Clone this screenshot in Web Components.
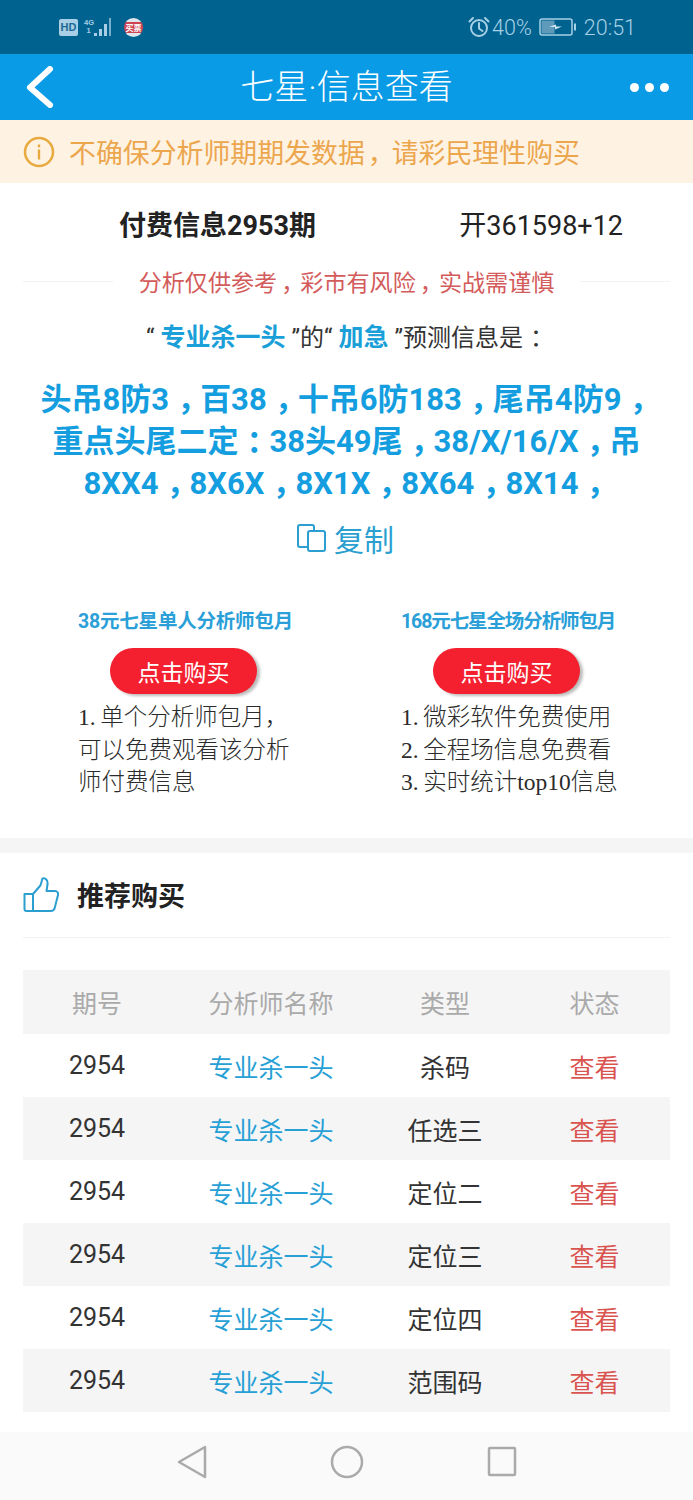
<!DOCTYPE html>
<html lang="zh-CN">
<head>
<meta charset="utf-8">
<title>七星·信息查看</title>
<style>
html,body{margin:0;padding:0;background:#fff}
body{font-family:"Noto Sans CJK SC","Noto Sans",sans-serif;width:693px;height:1500px;overflow:hidden;display:flex;flex-direction:column}
notice-bar i{font-style:normal;margin:0 -3px 0 3px}
</style>
</head>
<body>
<status-bar></status-bar>
<nav-bar>七星·信息查看</nav-bar>
<notice-bar>不确保分析师期期发数据<i>，</i>请彩民理性购买</notice-bar>
<info-panel></info-panel>
<plan-section>
  <plan-card title-text="38元七星单人分析师包月" title-spacing="-.2px"><div>1.&thinsp;单个分析师包月，</div><div>可以免费观看该分析</div><div>师付费信息</div></plan-card>
  <plan-card title-text="168元七星全场分析师包月" title-spacing="-1.1px"><div>1.&thinsp;微彩软件免费使用</div><div>2.&thinsp;全程场信息免费看</div><div>3.&thinsp;实时统计top10信息</div></plan-card>
</plan-section>
<recommend-list>
  <table-row kind="head" a="期号" b="分析师名称" c="类型" d="状态"></table-row>
  <table-row a="2954" b="专业杀一头" c="杀码" d="查看"></table-row>
  <table-row alt a="2954" b="专业杀一头" c="任选三" d="查看"></table-row>
  <table-row a="2954" b="专业杀一头" c="定位二" d="查看"></table-row>
  <table-row alt a="2954" b="专业杀一头" c="定位三" d="查看"></table-row>
  <table-row a="2954" b="专业杀一头" c="定位四" d="查看"></table-row>
  <table-row alt a="2954" b="专业杀一头" c="范围码" d="查看"></table-row>
</recommend-list>
<system-nav></system-nav>
<script>
const CJK='"Noto Sans CJK SC","Noto Sans",sans-serif';
function def(name,html,extra){
  customElements.define(name,class extends HTMLElement{
    constructor(){super();this.attachShadow({mode:'open'}).innerHTML=html;}
    connectedCallback(){if(extra)extra(this,this.shadowRoot);}
  });
}
def('status-bar',`<style>
:host{display:flex;flex:none;height:54px;box-sizing:border-box;padding:0 57px 0 59px;align-items:center;background:#00628f;color:#a6d0e6;font-family:Roboto,sans-serif;font-size:21.5px;font-weight:300}
.l,.r{display:flex;align-items:center}
.sp{flex:1}
.hd{width:19px;height:17px;background:#a8cfe5;border-radius:2px;color:#1c6a92;font:700 11px/17px "Liberation Sans",sans-serif;text-align:center;margin-right:6px}
.net{width:9px;display:flex;flex-direction:column;font:700 7.5px/8px "Liberation Sans",sans-serif;margin-right:1px;text-align:center}
.badge{width:19px;height:19px;margin-left:10px;border-radius:50%;background:linear-gradient(#dfe6ec 0 20%,#cf4453 20% 80%,#dfe6ec 80%);color:#fff;font:700 8px/19px "Noto Sans CJK SC",sans-serif;text-align:center}
svg{display:block}
</style>
<div class="l"><div class="hd">HD</div><div class="net"><span>4G</span><span>1</span></div>
<svg width="20" height="22" viewBox="0 0 20 22" fill="#a8cfe5"><rect x="0" y="17" width="3" height="3"/><rect x="5" y="13" width="3" height="7"/><rect x="10" y="8" width="3" height="12"/><rect x="15" y="2" width="2" height="18" opacity=".7"/></svg>
<div class="badge">买票</div></div>
<div class="sp"></div>
<div class="r">
<svg width="22" height="22" viewBox="0 0 22 22" fill="none" stroke="#a6d0e6" stroke-width="2" style="margin-right:2px"><circle cx="11" cy="12" r="8"/><path d="M11 7v5.5l3.5 2.5M1.5 5.5 5 2M20.5 5.5 17 2" stroke-linecap="round"/></svg>
<span>40%</span>
<svg width="38" height="18" viewBox="0 0 38 18" style="margin:0 7px" fill="none"><rect x="1" y="1" width="32" height="16" rx="2" stroke="#a6d0e6" stroke-width="1.5"/><rect x="2.5" y="2.5" width="13" height="13" fill="#5f9abb"/><path d="M10 9l7-2.5v2h6l-7 3v-2.500z" fill="#d3e6f1"/><rect x="35" y="5.500" width="2" height="7" fill="#a6d0e6"/></svg>
<span>20:51</span></div>`);
def('nav-bar',`<style>
:host{display:flex;flex:none;height:66px;align-items:center;background:#0a9be6;color:#fff;font-family:Roboto,${CJK};font-size:34px;font-weight:300}
.b{width:120px;padding-left:25px;box-sizing:border-box;display:flex;align-items:center}
.t{flex:1;text-align:center;line-height:66px;white-space:nowrap}
.m{width:120px;padding-right:24px;box-sizing:border-box;display:flex;justify-content:flex-end;gap:6px}
.m i{width:9px;height:9px;border-radius:50%;background:#fff;display:block}
</style>
<div class="b"><svg width="29" height="42" viewBox="0 0 29 42" fill="none"><path d="M25 3 5 21.500 25 39" stroke="#fff" stroke-width="6" stroke-linecap="round" stroke-linejoin="round"/></svg></div>
<div class="t"><slot></slot></div>
<div class="m"><i></i><i></i><i></i></div>`);
def('notice-bar',`<style>
:host{display:flex;flex:none;height:63px;align-items:center;background:#fef3e3;color:#eca64e;font-family:${CJK};font-size:26.900px;padding-left:23px;box-sizing:border-box;gap:14px;white-space:nowrap}
svg{display:block;flex:none}
</style>
<svg width="32" height="32" viewBox="0 0 32 32" fill="none"><circle cx="16" cy="16" r="14" stroke="#e8a93f" stroke-width="2.500"/><rect x="14.800" y="13.500" width="2.400" height="10" fill="#e8a93f"/><rect x="14.800" y="8.500" width="2.400" height="2.800" fill="#e8a93f"/></svg>
<span><slot></slot></span>`);
def('info-panel',`<style>
:host{display:block;flex:none;height:422px;box-sizing:border-box;padding-top:26px;font-family:${CJK};color:#222}
.top{display:flex;height:34px;align-items:center;line-height:34px}
.top b{margin-left:119px;font-size:27px;font-weight:700;white-space:nowrap;font-family:Roboto,${CJK}}
.top span{margin-left:auto;margin-right:70px;font-family:Roboto,${CJK};font-size:27px;white-space:nowrap}
.warn{display:flex;align-items:center;margin:20px 23px 0;height:36px;color:#d35b5b;font-size:23.100px;justify-content:center;white-space:nowrap}
.warn i{flex:1;height:1px;background:#f3f3f3}
.warn span{margin:0 26px}
.warn em{font-style:normal;margin:0 -4px 0 4px}
.ask{margin-top:21px;text-align:center;font-family:Roboto,${CJK};font-size:24px;line-height:36px;color:#333;white-space:pre}
.ask b{color:#1a9fd8;font-size:25px;font-weight:700}
.ask em{font-style:normal;margin:0 -7px 0 7px}
.big{margin-top:23px;text-align:center;color:#149ee0;font-family:Roboto,${CJK};font-size:31px;font-weight:700;line-height:42px;white-space:nowrap}
.big em{font-style:normal;margin:0 -8px 0 8px}
.copy{margin-top:11px;display:flex;justify-content:center;align-items:center;gap:8px;color:#2a9fd0;font-size:30px;line-height:44px;font-weight:400;padding-right:2px}
svg{display:block}
</style>
<div class="top"><b>付费信息2953期</b><span>开361598+12</span></div>
<div class="warn"><i></i><span>分析仅供参考<em>，</em>彩市有风险<em>，</em>实战需谨慎</span><i></i></div>
<div class="ask">“ <b>专业杀一头</b> ”的“ <b>加急</b> ”预测信息是<em>：</em></div>
<div class="big">头吊8防3<em>，</em>百38<em>，</em>十吊6防183<em>，</em>尾吊4防9<em>，</em><br>重点头尾二定<em>：</em>38头49尾<em>，</em>38/X/16/X<em>，</em>吊<br>8XX4<em>，</em>8X6X<em>，</em>8X1X<em>，</em>8X64<em>，</em>8X14<em>，</em></div>
<div class="copy"><svg width="29" height="28" viewBox="0 0 29 28" fill="none" stroke="#2a9fd0" stroke-width="2"><path d="M10 23H3a2 2 0 0 1-2-2V3a2 2 0 0 1 2-2h12a2 2 0 0 1 2 2v4"/><rect x="11" y="7" width="17" height="20" rx="2"/></svg><span>复制</span></div>`);
def('plan-section',`<style>
:host{display:grid;flex:none;grid-template-columns:323px 1fr;height:248px;padding-left:78px;box-sizing:border-box;border-bottom:15px solid #f5f5f5}
</style><slot></slot>`);
def('plan-card',`<style>
:host{display:block;font-family:${CJK}}
.t{color:#2a9fd8;font-size:19.500px;font-weight:700;line-height:28px;white-space:nowrap;font-family:Roboto,${CJK};padding-top:3px}
.btn{margin:12px 0 7px 32px;width:147px;height:46px;border-radius:23px;background:#f5202f;color:#fff;box-shadow:3px 2px 3px #bbb;font-size:23px;line-height:46px;text-align:center}
.l{color:#2b2b2b;font:300 23.500px/32.700px "Liberation Serif","Noto Sans CJK SC",serif;white-space:nowrap}
</style>
<div class="t"></div><div class="btn">点击购买</div><div class="l"><slot></slot></div>`,(el,r)=>{const t=r.querySelector('.t');t.textContent=el.getAttribute('title-text');t.style.letterSpacing=el.getAttribute('title-spacing')||0;});
def('recommend-list',`<style>
:host{display:block;flex:none;height:579px;box-sizing:border-box;padding:0 23px;font-family:${CJK}}
.h{display:flex;align-items:center;height:84px;box-sizing:content-box;border-bottom:1px solid #f2f2f2;gap:18px;color:#222;font-size:27px;font-weight:700}
.h span{padding-bottom:2px}
.rows{margin-top:32px}
svg{display:block}
</style>
<div class="h"><svg width="36" height="36" viewBox="0 0 36 36" fill="none" stroke="#2a9fd0" stroke-width="2" stroke-linejoin="round"><path d="M10 17H1.500v15a2 2 0 0 0 2 2H10z"/><path d="M10 17l7-8c1.500-2 1.500-5 2.500-7.500 3-.8 5.500 1.500 5 6L23.500 14H32c2.200 0 3.500 2 3 4l-3.300 13c-.5 2-2 3-4 3H10"/></svg><span>推荐购买</span></div>
<div class="rows"><slot></slot></div>`);
def('table-row',`<style>
:host{display:grid;grid-template-columns:148px 200px 148px 151px;height:63px;align-items:center;text-align:center;font-family:Roboto,${CJK};font-size:25px;color:#333;background:#fff}
:host([alt]),:host([kind=head]){background:#f5f5f5}
:host([kind=head]){height:64px}
.b{color:#27a0d5}.d{color:#d9534f}
:host([kind=head]) div{color:#aaa}
</style>
<div class="a"></div><div class="b"></div><div class="c"></div><div class="d"></div>`,(el,r)=>{for(const k of 'abcd')r.querySelector('.'+k).textContent=el.getAttribute(k);});
def('system-nav',`<style>
:host{display:flex;flex:1;background:#fafafa;justify-content:center;align-items:center;gap:122px;padding-bottom:8px;box-sizing:border-box}
svg{display:block}
</style>
<svg width="32" height="34" viewBox="0 0 32 34" fill="none" stroke="#aaa" stroke-width="2.500" stroke-linejoin="round"><path d="M29 2v30L3 17z"/></svg>
<svg width="34" height="34" viewBox="0 0 34 34" fill="none" stroke="#aaa" stroke-width="2.500"><circle cx="17" cy="17" r="15"/></svg>
<svg width="32" height="34" viewBox="0 0 32 34" fill="none" stroke="#aaa" stroke-width="2.500" stroke-linejoin="round"><rect x="3" y="3" width="26" height="27" rx="1"/></svg>`);
</script>
</body>
</html>
